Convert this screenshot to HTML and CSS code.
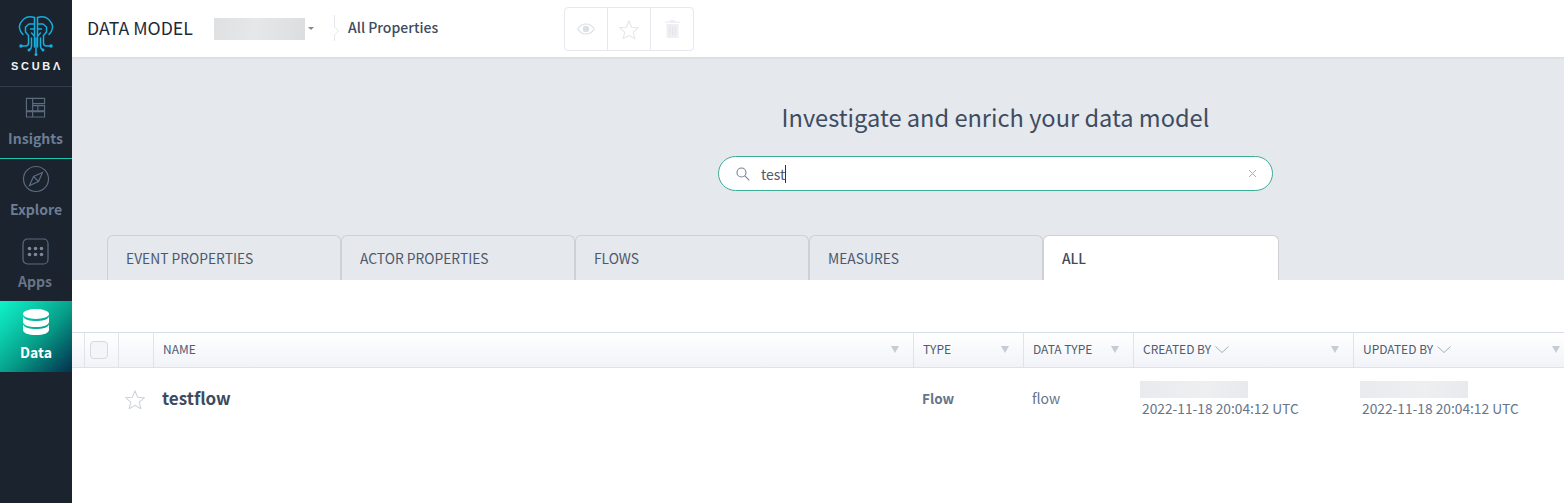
FILE: index.html
```html
<!DOCTYPE html>
<html lang="en">
<head>
<meta charset="utf-8">
<title>Data Model</title>
<link rel="stylesheet" href="styles.css">
</head>
<body>
<div class="app">
  <nav class="side">
    <div class="brand">
      <svg class="logo" viewBox="0 0 36 40" fill="none" stroke="#14aee0" stroke-width="1.500" stroke-linecap="round" stroke-linejoin="round">
        <path d="M16.500 1.500C13 .5 9 .5 6.500 2.500 3.500 5 1 8 1.500 12c.4 3 2 5 3.500 6.500"/>
        <path d="M19.500 1.500c3.500-1 7.500-1 10 1 3 2.500 5.500 5.500 5 9.500-.4 3-2 5-3.500 6.500"/>
        <path d="M16.500 1.500V31M19.500 1.500V31"/>
        <path d="M16.500 8H11L7.500 11v5l3 3.500V27c0 2-1.500 3-3 3H4"/>
        <path d="M19.500 8H25l3.500 3v5l-3 3.500V27c0 2 1.500 3 3 3H32"/>
        <path d="M16.500 13h-4M19.500 13h4M16.500 20l-3-3M19.500 20l3-3"/>
        <path d="M13.500 22v8c0 1.500-.8 3-2 3.500M22.500 22v8c0 1.500.8 3 2 3.500"/>
        <path d="M18 22v16"/>
        <g fill="#14aee0" stroke="none"><circle cx="3" cy="30" r="1.800"/><circle cx="33" cy="30" r="1.800"/><circle cx="11" cy="34" r="1.500"/><circle cx="25" cy="34" r="1.500"/><circle cx="18" cy="38.500" r="1.500"/></g>
      </svg>
      <div class="wordmark">SCUBΛ</div>
    </div>
    <a class="nav-item nav-insights">
      <svg class="nav-icon" width="21" height="21" viewBox="0 0 22 22" fill="none" stroke="#5d6b80" stroke-width="1.200"><path d="M1.500 1.500h6.500v13H1.500zM8 1.500h12.500v5.500H8zM8 9h5.500v5.500H8zM13.500 9h7v5.500h-7zM1.500 15.500H8v5.500H1.500zM8 15.500h12.500V21H8z"/></svg>
      <span>Insights</span>
    </a>
    <a class="nav-item nav-explore">
      <svg class="nav-icon" width="28" height="28" viewBox="0 0 28 28" fill="none" stroke="#5d6b80" stroke-width="1.200"><circle cx="14" cy="14" r="12.500"/><path d="M20.500 7.500l-9 4-4 9 9-4zM11.500 11.500l5 5"/></svg>
      <span>Explore</span>
    </a>
    <a class="nav-item nav-apps">
      <svg class="nav-icon" width="27" height="27" viewBox="0 0 27 27" fill="none" stroke="#5d6b80" stroke-width="1.200"><rect x="1" y="1" width="25" height="25" rx="4.500"/><g fill="#7b889b" stroke="none"><circle cx="7.500" cy="10.500" r="1.800"/><circle cx="13.500" cy="10.500" r="1.800"/><circle cx="19.500" cy="10.500" r="1.800"/><circle cx="7.500" cy="16.500" r="1.800"/><circle cx="13.500" cy="16.500" r="1.800"/><circle cx="19.500" cy="16.500" r="1.800"/></g></svg>
      <span>Apps</span>
    </a>
    <a class="nav-item nav-data">
      <svg class="nav-icon" width="26" height="26" viewBox="0 0 26 26" fill="#fff"><ellipse cx="13" cy="5" rx="13" ry="5"/><path d="M0 7.500C1.500 11 7 12 13 12s11.500-1 13-4.500V13c0 3-5.800 5-13 5S0 16 0 13z"/><path d="M0 15.500C1.500 19 7 20 13 20s11.500-1 13-4.500V21c0 3-5.800 5-13 5S0 24 0 21z"/></svg>
      <span>Data</span>
    </a>
  </nav>

  <main class="main">
    <header class="topbar">
      <h1 class="page-title">DATA MODEL</h1>
      <div class="picker">
        <div class="blur blur-picker"></div>
        <span class="caret"></span>
      </div>
      <svg class="crumb-sep" width="6" height="26" viewBox="0 0 6 26" fill="none" stroke="#e4e7ec" stroke-width="1"><path d="M.5 0v12l4 4-4 4v6"/></svg>
      <span class="crumb">All Properties</span>
      <div class="btn-group">
        <button class="icon-btn" aria-label="Watch"><svg width="18" height="12" viewBox="0 0 18 12"><path d="M.8 6C3 2.500 5.800 1 9 1s6 1.500 8.200 5C15 9.500 12.200 11 9 11S3 9.500.8 6z" fill="none" stroke="#dcdfe6" stroke-width="1.200"/><circle cx="9" cy="6" r="3.200" fill="#dcdfe6"/></svg></button>
        <button class="icon-btn" aria-label="Favourite"><svg width="20" height="19" viewBox="0 0 20 19"><path d="M10 1l2.700 6.200 6.500.6-4.900 4.400 1.500 6.500L10 15.300l-5.800 3.400 1.500-6.500L.8 7.800l6.500-.6z" fill="none" stroke="#e4e6ec" stroke-width="1.100"/></svg></button>
        <button class="icon-btn" aria-label="Delete"><svg width="15" height="18" viewBox="0 0 15 18" fill="#eeeff3"><path d="M5 0h5l.5 1.500H15V3H0V1.500h4.500z"/><path d="M1.500 4h12v12.500a1.500 1.500 0 0 1-1.500 1.500H3a1.500 1.500 0 0 1-1.500-1.500z"/><path d="M4.500 6.500h.8v9h-.8zM7.100 6.500h.8v9h-.8zM9.700 6.500h.8v9h-.8z" fill="#e0e2e8"/></svg></button>
      </div>
    </header>

    <section class="hero">
      <div class="search-block">
        <h2 class="hero-title">Investigate and enrich your data model</h2>
        <div class="search">
          <svg class="search-icon" width="14" height="14" viewBox="0 0 14 14" fill="none" stroke="#75819a" stroke-width="1.100"><circle cx="5.500" cy="5.500" r="4.500"/><path d="M8.800 8.800l4.500 4.500"/></svg>
          <span class="search-text">test</span><span class="search-cursor"></span>
          <svg class="search-clear" width="9" height="9" viewBox="0 0 9 9" stroke="#a5adb9" stroke-width="1"><path d="M1 1l7 7M8 1L1 8"/></svg>
        </div>
      </div>
      <div class="tabs">
        <div class="tab">EVENT PROPERTIES</div>
        <div class="tab">ACTOR PROPERTIES</div>
        <div class="tab">FLOWS</div>
        <div class="tab">MEASURES</div>
        <div class="tab tab-active">ALL</div>
      </div>
    </section>

    <section class="grid">
      <div class="row head">
        <div class="cell"></div>
        <div class="cell cell-check"><span class="checkbox"></span></div>
        <div class="cell"></div>
        <div class="cell"><span>NAME</span><i class="filter"></i></div>
        <div class="cell"><span>TYPE</span><i class="filter"></i></div>
        <div class="cell"><span>DATA TYPE</span><i class="filter"></i></div>
        <div class="cell"><span>CREATED BY</span><svg class="sort" width="14" height="7" viewBox="0 0 14 7" fill="none" stroke="#a6aebb"><path d="M.5.500L7 6.500 13.500.500"/></svg><i class="filter"></i></div>
        <div class="cell"><span>UPDATED BY</span><svg class="sort" width="14" height="7" viewBox="0 0 14 7" fill="none" stroke="#a6aebb"><path d="M.5.500L7 6.500 13.500.500"/></svg><i class="filter"></i></div>
      </div>
      <div class="row body">
        <div></div>
        <div></div>
        <div class="star-cell"><svg width="20" height="19" viewBox="0 0 20 19"><path d="M10 1l2.700 6.200 6.500.6-4.900 4.400 1.500 6.500L10 15.300l-5.800 3.400 1.500-6.500L.8 7.800l6.500-.6z" fill="none" stroke="#cdd3de" stroke-width="1.100"/></svg></div>
        <div class="name">testflow</div>
        <div class="type">Flow</div>
        <div class="dtype">flow</div>
        <div class="who"><div class="blur blur-user"></div><div class="date">2022-11-18 20:04:12 UTC</div></div>
        <div class="who who-last"><div class="blur blur-user"></div><div class="date">2022-11-18 20:04:12 UTC</div></div>
      </div>
    </section>
  </main>
</div>
</body>
</html>
```
FILE: styles.css
```css
* { box-sizing: border-box; }
html, body { margin: 0; height: 100%; }
body {
  font-family: "Noto Sans CJK SC", "Noto Sans", sans-serif;
  color: #3d4b60;
  background: #fff;
  overflow: hidden;
}
.app { display: flex; height: 503px; }

/* sidebar */
.side {
  width: 72px;
  flex: none;
  background: #1a232e;
  display: flex;
  flex-direction: column;
}
.brand {
  height: 87px;
  border-bottom: 1px solid #333d49;
  display: flex;
  flex-direction: column;
  align-items: center;
  padding-top: 16px;
}
.logo { width: 36px; height: 40px; display: block; }
.wordmark {
  margin-top: 4px;
  margin-left: 2px;
  font-size: 11px;
  line-height: 13px;
  font-weight: 700;
  letter-spacing: 2.700px;
  color: #f2f4f6;
  font-family: "Liberation Sans", sans-serif;
}
.nav-item {
  display: flex;
  flex-direction: column;
  align-items: center;
  font-size: 14px;
  line-height: 20px;
  font-weight: 700;
  color: #6d7d94;
}
.nav-insights { height: 72px; padding-top: 10px; border-bottom: 1px solid #1cc9ad; padding-right: 1px; }
.nav-insights span { margin-top: 10px; }
.nav-explore { height: 72px; padding-top: 6px; }
.nav-explore span { margin-top: 6px; }
.nav-apps { height: 70px; padding-top: 7px; padding-right: 2px; }
.nav-apps span { margin-top: 6px; color: #687588; }
.nav-data {
  height: 71px;
  padding-top: 8px;
  color: #fff;
  background: linear-gradient(135deg, #0ff3cb 0%, #0ccfae 25%, #069b87 55%, #04465a 90%, #05314a 100%);
}
.nav-data span { margin-top: 7px; }
.nav-icon { display: block; flex: none; }

/* main column */
.main { flex: 1; min-width: 0; display: flex; flex-direction: column; }
.topbar {
  height: 57px;
  flex: none;
  display: flex;
  align-items: center;
  padding-left: 15px;
  position: relative;
  box-shadow: 0 0 3px rgba(60, 70, 85, .18);
}
.page-title {
  margin: 0 0 3px;
  width: 127px;
  font-size: 17.700px;
  line-height: 24px;
  font-weight: 400;
  color: #1e2937;
}
.picker { display: flex; align-items: center; width: 120px; }
.blur-picker { width: 91px; height: 22px; }
.blur { background: linear-gradient(100deg, #dfe0e2 0%, #e6e7e8 45%, #dcddde 100%); filter: blur(.4px); }
.caret {
  margin-left: 3px;
  border: 3px solid transparent;
  border-top: 3px solid #7f8a99;
  margin-top: 3px;
}
.crumb-sep { flex: none; margin-top: -1px; }
.crumb { margin: 0 0 3px 8px; width: 216px; font-size: 14px; line-height: 18px; font-weight: 500; color: #3d4b60; }
.btn-group {
  display: flex;
  width: 130px;
  height: 44px;
  border: 1px solid #e6e8ee;
  border-radius: 4px;
  margin-top: 1px;
}
.icon-btn {
  flex: 1;
  padding: 0;
  border: 0;
  background: none;
  border-right: 1px solid #e6e8ee;
  display: flex;
  align-items: center;
  justify-content: center;
}
.icon-btn:last-child { border-right: 0; }

/* hero */
.hero {
  height: 223px;
  flex: none;
  background: #e5e8ed;
  display: flex;
  flex-direction: column;
}
.search-block { margin-left: 646px; width: 555px; height: 178px; padding-top: 44px; }
.hero-title {
  margin: 0;
  text-align: center;
  font-size: 23.600px;
  line-height: 32px;
  font-weight: 400;
  color: #3f4c60;
}
.search {
  margin-top: 23px;
  height: 35px;
  border: 1px solid #3cab97;
  border-radius: 18px;
  background: #fff;
  display: flex;
  align-items: center;
  padding: 0 15px 0 17px;
}
.search-icon { flex: none; }
.search-text { margin-left: 11px; font-size: 14px; line-height: 20px; color: #4d5a6c; }
.search-cursor { width: 1px; height: 18px; background: #2a3646; }
.search-clear { margin-left: auto; flex: none; }
.tabs { display: flex; padding-left: 35px; height: 45px; }
.tab {
  width: 234px;
  height: 45px;
  border: 1px solid #cdd0d4;
  border-bottom: 0;
  border-radius: 6px 6px 0 0;
  padding: 12px 0 0 18px;
  font-size: 13.800px;
  line-height: 20px;
  color: #4b586b;
}
.tab-active {
  width: 236px;
  background: #fff;
  font-weight: 500;
  color: #3d4b60;
}

/* grid */
.grid { margin-top: 52px; overflow: hidden; }
.row {
  display: grid;
  grid-template-columns: 13px 34px 35px 760px 110px 110px 220px 220px;
}
.head {
  height: 36px;
  border-top: 1px solid #d9dee6;
  border-bottom: 1px solid #dfe3e9;
  background: linear-gradient(#ffffff, #f1f3f8);
}
.cell {
  display: flex;
  align-items: center;
  border-right: 1px solid #dfe3ea;
  padding: 0 0 2px 9px;
  font-size: 12px;
  line-height: 16px;
  color: #4f5c70;
  position: relative;
}
.cell:last-child { border-right: 0; }
.cell-check { padding: 0 0 0 5px; }
.checkbox {
  width: 18px;
  height: 18px;
  border: 1px solid #d4d9e2;
  border-radius: 4px;
  background: #f3f5f8;
}
.sort { margin-left: 4px; }
.filter {
  margin-left: auto;
  margin-right: 14px;
  border: 4px solid transparent;
  border-top: 7px solid #c6cbd4;
  border-bottom: 0;
}
.body { height: 60px; align-items: center; }
.star-cell { display: flex; align-items: center; padding-left: 6px; margin-top: 2px; }
.name { padding-left: 8px; font-size: 17px; line-height: 24px; font-weight: 700; color: #3d4b60; }
.type { padding-left: 8px; font-size: 13.500px; line-height: 18px; font-weight: 700; color: #66748a; }
.dtype { padding-left: 8px; font-size: 14px; line-height: 18px; color: #66748a; }
.who { padding-left: 6px; margin-top: 2px; }
.blur-user { width: 108px; height: 17px; background: linear-gradient(100deg, #e9eaed, #eeeff1 60%, #e8e9ec); }
.date { margin: 1px 0 0 2px; font-size: 13.750px; line-height: 18px; color: #66748a; }
```
